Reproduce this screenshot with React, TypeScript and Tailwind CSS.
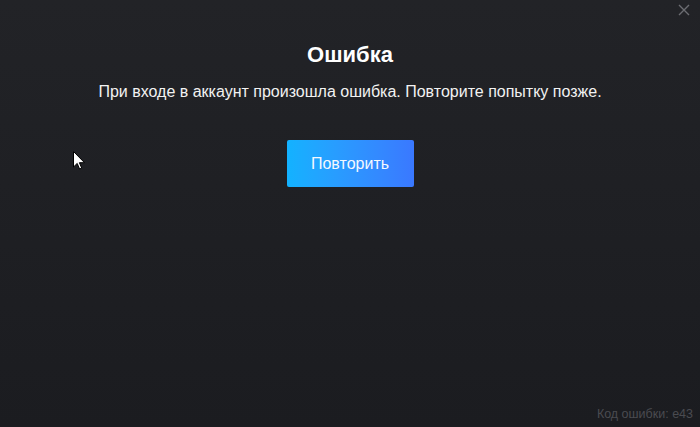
import React from 'react';

const CloseIcon = () => (
  <svg width="12" height="12" viewBox="0 0 12 12" fill="none">
    <path d="M1 1L11 11M11 1L1 11" stroke="#6c6d72" strokeWidth="1.4" />
  </svg>
);

const Cursor = () => (
  <svg width="12" height="19" viewBox="0 0 12 19">
    <path d="M0.5 0.5V16L4.2 12.4L6.6 18L8.7 17.1L6.4 11.7H11.5Z" fill="#ffffff" stroke="#000000" strokeWidth="1" />
  </svg>
);

export default function App() {
  return (
    <div
      className="relative flex h-[427px] w-[700px] flex-col items-center overflow-hidden bg-gradient-to-b from-[#222327] to-[#1b1c20] text-white"
      style={{ fontFamily: '"Liberation Sans", Arial, sans-serif' }}
    >
      <button className="absolute right-[8px] top-[2px] p-[2px]">
        <CloseIcon />
      </button>

      <h1 className="mt-[41px] text-[22px] font-bold leading-[28px]">Ошибка</h1>
      <p className="mt-[11px] text-[16px] leading-[24px] text-[#f2f2f2]">
        При входе в аккаунт произошла ошибка. Повторите попытку позже.
      </p>

      <button className="mt-[36px] h-[47px] w-[127px] rounded-[2px] bg-gradient-to-r from-[#12b2ff] to-[#3a78ff] text-[16px] text-[#f4f8ff]">
        Повторить
      </button>

      <span className="absolute bottom-[5px] right-[7px] text-[12.5px] leading-[16px] text-[#4a4b50]">
        Код ошибки: e43
      </span>

      <div className="absolute left-[73px] top-[151px]">
        <Cursor />
      </div>
    </div>
  );
}
